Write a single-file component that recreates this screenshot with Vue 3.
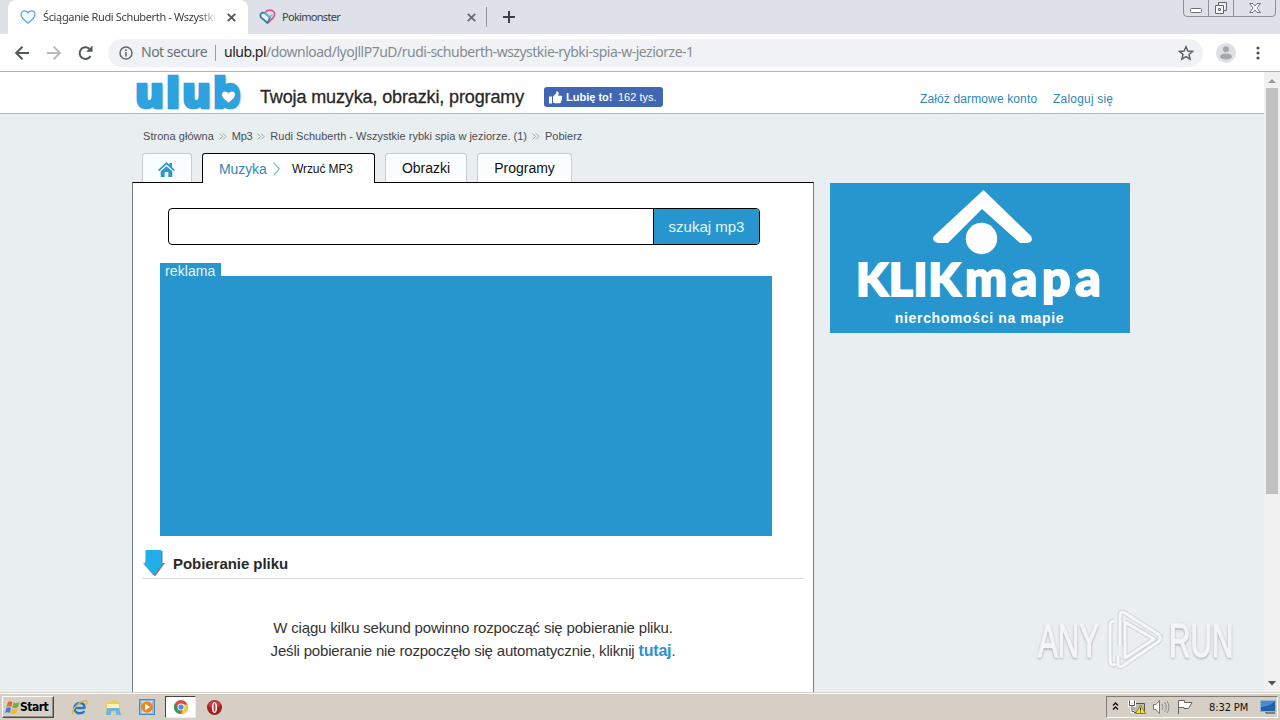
<script setup>
const crumbs = [
  { text: 'Strona główna', cls: 'c1' },
  { text: 'Mp3', cls: 'c2' },
  { text: 'Rudi Schuberth - Wszystkie rybki spia w jeziorze. (1)', cls: 'c3' },
  { text: 'Pobierz', cls: 'c4' },
]
</script>

<template>
  <div class="screen">
    <div class="tabstrip">
      <div class="btab active">
        <svg class="fav" width="16" height="16" viewBox="0 0 16 16"><path d="M8 14.2C4 11.2 1 8.400 1 5.500C1 3.300 2.700 1.900 4.500 1.900C6 1.900 7.300 2.700 8 4C8.700 2.700 10 1.900 11.500 1.900C13.300 1.900 15 3.300 15 5.500C15 8.400 12 11.200 8 14.200Z" fill="#f4fbff" stroke="#58abd6" stroke-width="1.300" /></svg>
        <span class="ttl t1">Ściąganie Rudi Schuberth - Wszystki</span>
        <svg class="x" width="9" height="9" viewBox="0 0 9 9"><path d="M.8.8L8.200 8.200M8.200.8L.8 8.200" stroke="#53575b" stroke-width="1.900" /></svg>
      </div>
      <div class="btab second">
        <svg class="fav" width="17" height="16" viewBox="0 0 17 16"><path d="M6.500 3C8.500.6 13 .5 15 3C17 6.500 14 9.500 9 13.800" fill="none" stroke="#df5a8c" stroke-width="1.800" /><path d="M8.500 14L2 8.500C0 5.500 3 2.500 6 4L11 8.500Z" fill="#eaf6ff" stroke="#357ba8" stroke-width="1.700" /><path d="M6 4L10.500 8L13.500 5.500" fill="none" stroke="#6db5d9" stroke-width="1.500" /></svg>
        <span class="ttl t2">Pokimonster</span>
        <svg class="x" width="9" height="9" viewBox="0 0 9 9"><path d="M.8.8L8.200 8.200M8.200.8L.8 8.200" stroke="#66696e" stroke-width="1.800" /></svg>
      </div>
      <i class="tsep"></i>
      <svg class="plus" width="12" height="12" viewBox="0 0 12 12"><path d="M6 0V12M0 6H12" stroke="#3c4043" stroke-width="2" /></svg>
      <svg class="winctl" width="94" height="18" viewBox="0 0 94 18">
        <path d="M.5 0V13Q.5 16.500 4 16.500H89Q92.500 16.500 92.500 13V0M25.500 0V16M50.500 0V16" fill="none" stroke="#8b909a" />
        <rect x="7.500" y="8.500" width="11" height="4" rx="1" fill="#fff" stroke="#6a6e77" />
        <path d="M35.500 2.500H43.500V10.500H35.500Z" fill="#eee" stroke="#62666f" /><path d="M32.500 5.500H40.500V13.500H32.500ZM35.500 8.500H37.500V10.500H35.500Z" fill="#fff" stroke="#62666f" />
        <path d="M66.500 3.500H70L72 6L74 3.500H77.500L74 8L77.500 12.500H74L72 10L70 12.500H66.500L70 8Z" fill="#fff" stroke="#777b84" />
      </svg>
    </div>

    <div class="toolbar">
      <svg class="nav" width="94" height="20" viewBox="0 0 94 20">
        <g fill="none" stroke-width="2"><path d="M15 10H2.500M8.500 3.700L2.200 10L8.500 16.300" stroke="#53575b" /><path d="M33 10H46M39.700 3.700L46 10L39.700 16.300" stroke="#b8babd" /><path d="M76.500 13A5.800 5.800 0 1 1 75.300 5.800" stroke="#53575b" /></g>
        <path d="M78.500 2.500V8.800H72.200Z" fill="#53575b" />
      </svg>
      <div class="omni">
        <svg class="info" width="14" height="14" viewBox="0 0 14 14"><circle cx="7" cy="7" r="6" fill="none" stroke="#65696e" stroke-width="1.500" /><path d="M7 6V10.500M7 3.300V4.900" stroke="#65696e" stroke-width="1.600" /></svg>
        <span class="secure">Not secure</span>
        <i class="osep"></i>
        <span class="url"><b>ulub.pl</b>/download/lyoJllP7uD/rudi-schuberth-wszystkie-rybki-spia-w-jeziorze-1</span>
        <svg class="star" width="16" height="16" viewBox="0 0 16 16"><path d="M8 1.700L9.900 6L14.600 6.400L11 9.500L12.100 14.100L8 11.600L3.900 14.100L5 9.500L1.400 6.400L6.100 6Z" fill="none" stroke="#5f6368" stroke-width="1.500" /></svg>
      </div>
      <svg class="avatar" width="20" height="20" viewBox="0 0 20 20"><circle cx="10" cy="10" r="10" fill="#dfe0e1" /><circle cx="10" cy="6.200" r="3" fill="#a5a7a9" /><ellipse cx="10" cy="13.500" rx="6" ry="3" fill="#a5a7a9" /></svg>
      <svg class="dots" width="4" height="14" viewBox="0 0 4 14"><circle cx="2" cy="2" r="1.600" fill="#505458" /><circle cx="2" cy="7" r="1.600" fill="#505458" /><circle cx="2" cy="12" r="1.600" fill="#505458" /></svg>
    </div>

    <div class="viewport">
      <div class="page">
        <header class="head">
          <div class="logo"><span>ulub</span>
            <svg class="lheart" width="15" height="14" viewBox="0 0 14 13"><path d="M7 12C3 9 .7 7 .7 4C.7.600 5 0 7 3C9 0 13.300.600 13.300 4C13.300 7 11 9 7 12Z" fill="#fff" stroke="#4f93bb" stroke-width=".7" /></svg>
          </div>
          <span class="slogan">Twoja muzyka, obrazki, programy</span>
          <div class="like">
            <svg width="14" height="13" viewBox="0 0 14 13"><path d="M0 5.500H3V12.500H0ZM4 5.500L7 2.500L7.500.300Q10 0 9.700 2.800L9.200 4.700H12.500Q13.800 5.500 12.900 7Q13.500 8 12.600 9Q12.800 10.200 11.900 10.700Q11.900 12.300 10.500 12.300H6L4 11.400Z" fill="#fff" /></svg>
            <b>Lubię to!</b><span>162 tys.</span>
          </div>
          <nav class="account"><a class="a1">Załóż darmowe konto</a><a class="a2">Zaloguj się</a></nav>
        </header>

        <div class="crumbs">
          <template v-for="(c, i) in crumbs" :key="i">
            <svg v-if="i" class="sep" width="8" height="7" viewBox="0 0 8 7"><path d="M.6.500L3.600 3.500L.6 6.500M4 .5L7 3.500L4 6.500" fill="none" stroke="#9da2a6" /></svg>
            <span :class="c.cls">{{ c.text }}</span>
          </template>
        </div>

        <div class="cols">
          <main class="main">
            <div class="tabs">
              <div class="tab home"><svg width="17" height="15" viewBox="0 0 17 15"><path d="M8.500 0L11.500 2.800V1H14V5.200L17 8L16 9.300L8.500 2.500L1 9.300L0 8ZM8.500 4.200L14.300 9.300V15H10.300V10H6.700V15H2.700V9.300Z" fill="#3197cb" /></svg></div>
              <div class="tab on"><span class="m1">Muzyka</span><svg width="7" height="14" viewBox="0 0 7 14"><path d="M.7.700L6.200 7L.7 13.300" fill="none" stroke="#7dbce0" stroke-width="1.200" /></svg><span class="m2">Wrzuć MP3</span></div>
              <div class="tab obr"><span>Obrazki</span></div>
              <div class="tab prog"><span>Programy</span></div>
            </div>
            <div class="panel">
              <div class="search"><div class="input"></div><div class="btn"><span>szukaj mp3</span></div></div>
              <div class="adlabel"><span>reklama</span></div>
              <div class="ad"></div>
              <div class="dl">
                <svg width="23" height="27" viewBox="0 0 23 27"><path d="M4 1H19.500V13H22L12 26.500L2 15Z" fill="#687f8d" /><path d="M2.500 0H18V13H20.500L10.500 25.500L0 13H2.500Z" fill="#22aee9" /></svg>
                <b>Pobieranie pliku</b>
              </div>
              <div class="msg">
                <p class="p1">W ciągu kilku sekund powinno rozpocząć się pobieranie pliku.</p>
                <p class="p2"><span>Jeśli pobieranie nie rozpoczęło się automatycznie, kliknij </span><b>tutaj</b>.</p>
              </div>
            </div>
          </main>
          <aside class="klik">
            <svg class="roof" width="300" height="72" viewBox="0 0 300 72"><path d="M153.500 7L201 53Q204 59 197 60H190L152 26L118 60H108Q101 58 104 53Z" fill="#fff" /><circle cx="151.500" cy="55.500" r="15.700" fill="#fff" /></svg>
            <div class="kname"><span class="k1">KLIK</span><span class="k2">mapa</span></div>
            <div class="ksub">nierchomości na mapie</div>
          </aside>
        </div>

        <div class="wm">
          <span class="any">ANY</span>
          <svg width="58" height="64" viewBox="0 0 58 64"><path d="M13 37V7Q13 1 18 4L51 25Q56 29 51 33L17 56Q11 60 11 54V47M7 12Q3 12 3 17V51Q3 58 9 55M18 13V49L47 30L18 13" fill="none" stroke="#d0d4d7" stroke-width="5" stroke-linejoin="round" /><path d="M13 37V7Q13 1 18 4L51 25Q56 29 51 33L17 56Q11 60 11 54V47M7 12Q3 12 3 17V51Q3 58 9 55M18 13V49L47 30L18 13" fill="none" stroke="#f5f7f8" stroke-width="3" stroke-linejoin="round" /></svg>
          <span class="run">RUN</span>
        </div>
      </div>
      <div class="scroll">
        <svg width="16" height="16" viewBox="0 0 16 16"><path d="M4 11H12L8 7Z" fill="#999" /></svg>
        <i class="thumb"></i>
        <svg class="down" width="16" height="16" viewBox="0 0 16 16"><path d="M4 5H12L8 9.500Z" fill="#505050" /></svg>
      </div>
    </div>

    <footer class="taskbar">
      <div class="start"><svg width="15" height="15" viewBox="0 0 15 15"><path d="M3 2Q5 .5 7.500 2L6.300 7Q4 5.500 1.500 7Z" fill="#e8692d" /><path d="M8.500 2.400Q11 4 14.500 2L13 7.200Q10 9 7.300 7.500Z" fill="#72b244" /><path d="M1.300 8Q3.500 6.500 6 8L4.800 13Q2 11.500 0 13Z" fill="#3c83ce" /><path d="M7 8.500Q10 10 12.800 8.200L11.500 13Q8 15 5.700 13.500Z" fill="#f2bc2e" /></svg><b>Start</b></div>
      <svg class="ie" width="17" height="17" viewBox="0 0 17 17"><path d="M13.500 9H4M13.700 9.500C14 5.500 11.500 4 9 4C5.500 4 3.500 6.500 3.500 9.200C3.500 12 5.500 14.300 8.800 14.300C11 14.300 12.500 13.500 13.300 12" fill="none" stroke="#2479ca" stroke-width="2.500" /><path d="M2 15.500C-1 12 9 1.500 15 1.500C17 2.500 15.500 5 14.500 6.500" fill="none" stroke="#d9b83f" stroke-width="1.300" /></svg>
      <svg class="folder" width="16" height="17" viewBox="0 0 16 17"><path d="M1 3H6L7 1H12L13 3H15V14H1Z" fill="#e6cc6c" /><path d="M2 5H14V9H2Z" fill="#fff3b7" /><path d="M2 9H14L16 16H11V12H6V16H1Z" fill="#70b3dd" /></svg>
      <svg class="media" width="16" height="16" viewBox="0 0 16 16"><rect x=".5" y=".5" width="15" height="15" fill="#8ebfe6" stroke="#4e87b7" /><rect x="3" y="2" width="10" height="12" fill="#c9e3f6" /><circle cx="8" cy="8" r="5.800" fill="#f1841c" /><path d="M6 4.500L11 8L6 11.500Z" fill="#fff" /></svg>
      <div class="chrome"><svg width="14" height="14" viewBox="0 0 16 16"><circle cx="8" cy="8" r="8" fill="#dd4f43" /><path d="M1 4L8 16A8 8 0 0 1 1 4Z" fill="#25a35a" /><path d="M8 5H15.400A8 8 0 0 1 8 16L11 9Z" fill="#f8ca37" /><circle cx="8" cy="8" r="4" fill="#fff" /><circle cx="8" cy="8" r="3" fill="#4b8bec" /></svg></div>
      <svg class="opera" width="17" height="17" viewBox="0 0 17 17"><circle cx="8.500" cy="8.500" r="7.500" fill="#a91c20" /><path d="M2 4Q8-1 15 4L13 8H3Z" fill="#dd5350" opacity=".6" /><ellipse cx="8.500" cy="8.500" rx="2.600" ry="5.600" fill="#fff" /><ellipse cx="8.500" cy="8.500" rx="1" ry="4.300" fill="#b54343" /></svg>
      <div class="tray">
        <svg width="90" height="18" viewBox="0 0 90 18">
          <path d="M6 7.500L8.500 5L11 7.500M6 11.500L8.500 9L11 11.500" fill="none" stroke="#111" stroke-width="1.400" />
          <path d="M26.500 5.500H37.500V14.500H26.500Z" fill="#bbb" stroke="#555" /><path d="M22.500 2.500V7.500H27.500V2.500M25 7.500V13.500H27M25 2V5" fill="none" stroke="#fff" stroke-width="3" /><path d="M22.500 2.500V7.500H27.500V2.500M25 7.500V13.500H27" fill="none" stroke="#555" /><path d="M33.500 7L38.500 15.500H28.500Z" fill="#f7df36" stroke="#998410" /><path d="M33.500 9.500V12.500M33.500 13.500V14.500" stroke="#222" />
          <path d="M46.500 6.500H49L52.500 2.500V15.500L49 11.500H46.500Z" fill="#fff" stroke="#777" /><path d="M55 6Q57 9 55 12M57.500 4Q61 9 57.500 14M60 3Q64 9 60 15" fill="none" stroke="#8c8c8c" />
          <path d="M71.500 16V2.500H77.500V4.500H85L81.500 10.500H77V9.500H71.500" fill="#fff" stroke="#666" />
        </svg>
        <span class="clock">8:32 PM</span>
        <svg class="desk" width="17" height="14" viewBox="0 0 17 14"><rect x=".5" y=".5" width="15" height="11" fill="#225fac" stroke="#96b5d2" /><path d="M1 7Q9 7 15 1V1H1Z" fill="#478dd0" /><path d="M6 12V13H15" fill="none" stroke="#333" /></svg>
      </div>
    </footer>
  </div>
</template>

<style>
html, body { margin: 0; overflow: hidden; }
</style>
<style scoped>
* { box-sizing: border-box; }
svg { display: block; flex: none; }
span, b, a { white-space: nowrap; }
.screen { width: 1280px; height: 720px; display: flex; flex-direction: column; overflow: hidden; font-family: "Liberation Sans", Arial, sans-serif; }
.tabstrip { height: 34px; flex: none; background: #dee1e8; display: flex; position: relative; padding-left: 8px; }
.btab { height: 34px; display: flex; align-items: center; }
.btab.active { width: 240px; background: #fff; border-radius: 8px 8px 0 0; padding-left: 12px; }
.second { width: 238px; padding-left: 11px; }
.ttl { font: 11px/16px "Noto Sans", sans-serif; color: #3b3f43; }
.t1 { width: 174px; margin-left: 7px; letter-spacing: -.35px; -webkit-mask-image: linear-gradient(90deg, #000 90%, transparent); mask-image: linear-gradient(90deg, #000 90%, transparent); }
.t2 { margin-left: 6px; width: 184px; letter-spacing: -.7px; }
.x { margin-left: 10px; }
.second .x { margin-left: 1px; }
.tsep { width: 1px; height: 20px; margin-top: 7px; background: #8f939a; }
.plus { margin: 11px 0 0 16px; }
.winctl { position: absolute; right: 3px; top: 0; }
.toolbar { height: 38px; flex: none; display: flex; align-items: center; border-bottom: 1px solid #adb2b5; background: #fff; }
.nav { margin-left: 14px; }
.omni { width: 1095px; height: 28px; border-radius: 14px; display: flex; align-items: center; padding-left: 11px; background: #f0f3f6; font: 14px/20px "Noto Sans", sans-serif; color: #868b90; position: relative; }
.secure { width: 74px; margin: 0 0 2px 8px; letter-spacing: -.5px; color: #6c7075; }
.osep { width: 1px; height: 16px; background: #9a9da1; margin-right: 8px; }
.url { width: 470px; letter-spacing: -.5px; margin-bottom: 2px; }
.url b { font-weight: 400; color: #222; }
.star { position: absolute; right: 9px; top: 6px; }
.avatar { margin-left: 13px; }
.dots { margin-left: 20px; }
.viewport { height: 620px; flex: none; display: flex; }
.page { width: 1264px; background: #e9eef1; position: relative; overflow: hidden; }
.head { height: 42px; background: #fff; border-bottom: 1px solid #b4b8ba; display: flex; padding-left: 135px; position: relative; }
.logo { width: 125px; position: relative; font: 800 43px/40px "Open Sans", sans-serif; color: #2da2df; -webkit-text-stroke: 2.5px #2da2df; text-shadow: 2px 1px 2px #b8bdc0; }
.logo span { display: block; letter-spacing: 2.2px; }
.lheart { position: absolute; left: 86px; top: 18px; }
.slogan { width: 284px; font-size: 18px; line-height: 50px; color: #282828; letter-spacing: -.13px; -webkit-text-stroke: .3px #282828; }
.like { width: 119px; height: 20px; margin-top: 15px; border-radius: 3px; background: #4267b2; color: #fff; display: flex; align-items: center; padding-left: 5px; font-size: 11px; }
.like b { width: 49px; margin: 0 3px; }
.account { position: absolute; left: 920px; top: 18px; display: flex; font-size: 12px; line-height: 18px; color: #2b87ba; }
.a1 { width: 133px; letter-spacing: .13px; }
.a2 { letter-spacing: .2px; }
.crumbs { height: 39px; padding: 5px 0 0 143px; display: flex; align-items: center; font-size: 11px; line-height: 14px; color: #4a4d51; }
.c1 { letter-spacing: .04px; }
.c2 { letter-spacing: -.3px; }
.c3 { letter-spacing: .01px; }
.sep { margin: 0 5px; }
.cols { display: flex; padding-left: 132px; }
.main { width: 682px; }
.tabs { height: 29px; display: flex; padding-left: 10px; position: relative; z-index: 1; align-items: flex-start; }
.tab { height: 29px; border: 1px solid #c7cdd0; border-bottom: 0; background: #fafdfe; border-radius: 3px 3px 0 0; display: flex; align-items: center; justify-content: center; font-size: 14px; color: #111; }
.home { width: 50px; margin-right: 10px; padding-top: 2px; }
.home svg { margin-left: -1px; }
.tab.on { width: 173px; height: 30px; border: 1px solid #000; border-bottom: 0; background: #fff; margin-right: 10px; justify-content: flex-start; padding-left: 16px; }
.m1 { width: 47px; color: #3487b8; margin-right: 7px; letter-spacing: -.1px; }
.m2 { margin-left: 12px; font-size: 12px; letter-spacing: -.1px; }
.obr { width: 82px; margin-right: 10px; }
.prog { width: 95px; }
.panel { height: 512px; background: #fff; border: 1px solid #6e8581; border-top: 1px solid #000; border-bottom: 0; padding: 25px 10px 0 10px; }
.search { width: 592px; height: 37px; margin-left: 25px; display: flex; border: 1px solid #000; border-radius: 4px; overflow: hidden; }
.input { flex: 1; }
.btn { width: 106px; border-left: 1px solid #000; background: #2796ce; color: #e6f6ff; font-size: 15px; line-height: 36px; text-align: center; }
.adlabel { width: 61px; height: 13px; margin: 18px 0 0 17px; padding-left: 5px; background: #2796ce; color: #e6f6ff; font-size: 14px; line-height: 16px; letter-spacing: .1px; }
.ad { width: 612px; height: 260px; margin-left: 17px; background: #2796ce; }
.dl { height: 43px; display: flex; padding-top: 14px; border-bottom: 1px solid #d5d8d9; color: #292929; font-size: 15px; line-height: 28px; }
.dl b { margin-left: 7px; letter-spacing: -.05px; }
.msg { padding-top: 37px; text-align: center; font-size: 15px; line-height: 23px; color: #333; letter-spacing: -.18px; }
.msg p { margin: 0; white-space: nowrap; }
.msg b { color: #2b93c9; font-size: 16px; line-height: 20px; }
.klik { width: 300px; height: 150px; margin: 30px 0 0 16px; background: #2796ce; color: #fff; }
.kname { height: 50px; margin-top: -3px; display: flex; align-items: baseline; padding-left: 26px; font: 900 46px/50px Lato, "Open Sans", sans-serif; -webkit-text-stroke: 2px #fff; }
.k1 { width: 109px; letter-spacing: .8px; }
.k2 { font-size: 50px; letter-spacing: 4.6px; line-height: 50px; }
.ksub { font-size: 14px; font-weight: 700; text-align: center; margin-top: 8px; letter-spacing: .65px; padding-right: 1px; }
.wm { position: absolute; left: 1038px; top: 537px; display: flex; align-items: center; color: #f3f5f6; -webkit-text-stroke: 1.5px #f3f5f6; text-shadow: 0 2px 3px #a4aaae, 0 0 3px #b0b6b9; font-size: 48px; line-height: 64px; }
.any, .run { transform: scaleX(.62); transform-origin: left; }
.any { width: 69px; }
.run { width: 66px; margin-left: 4px; }
.scroll { width: 16px; background: #f1f1f1; display: flex; flex-direction: column; }
.thumb { width: 12px; height: 406px; margin-left: 2px; background: #c1c1c1; }
.down { margin-top: auto; }
.taskbar { height: 28px; flex: none; background: #d6cfc6; border-top: 1px solid #d6cfc6; box-shadow: inset 0 1px #fff; display: flex; align-items: center; padding: 1px 2px 0; position: relative; }
.start { width: 52px; height: 22px; border: 1px solid; border-color: #fff #484848 #484848 #fff; box-shadow: inset -1px -1px #969189; display: flex; align-items: center; padding-left: 2px; font: 700 12px "DejaVu Sans Condensed", sans-serif; letter-spacing: -.5px; }
.ie { margin-left: 17px; }
.folder { margin-left: 17px; }
.media { margin-left: 18px; }
.chrome { margin-left: 10px; width: 31px; height: 22px; background: #fff; border: 1px solid; border-color: #444 #eee #eee #444; display: flex; align-items: center; justify-content: center; }
.opera { margin-left: 10px; }
.tray { position: absolute; left: 1106px; right: 2px; top: 3px; height: 22px; border: 1px solid; border-color: #807c76 #fff #fff #807c76; display: flex; align-items: center; }
.clock { width: 50px; margin-left: 12px; font: 11px "DejaVu Sans Condensed", sans-serif; letter-spacing: -.1px; color: #111; }
.desk { margin-left: 1px; }
</style>
